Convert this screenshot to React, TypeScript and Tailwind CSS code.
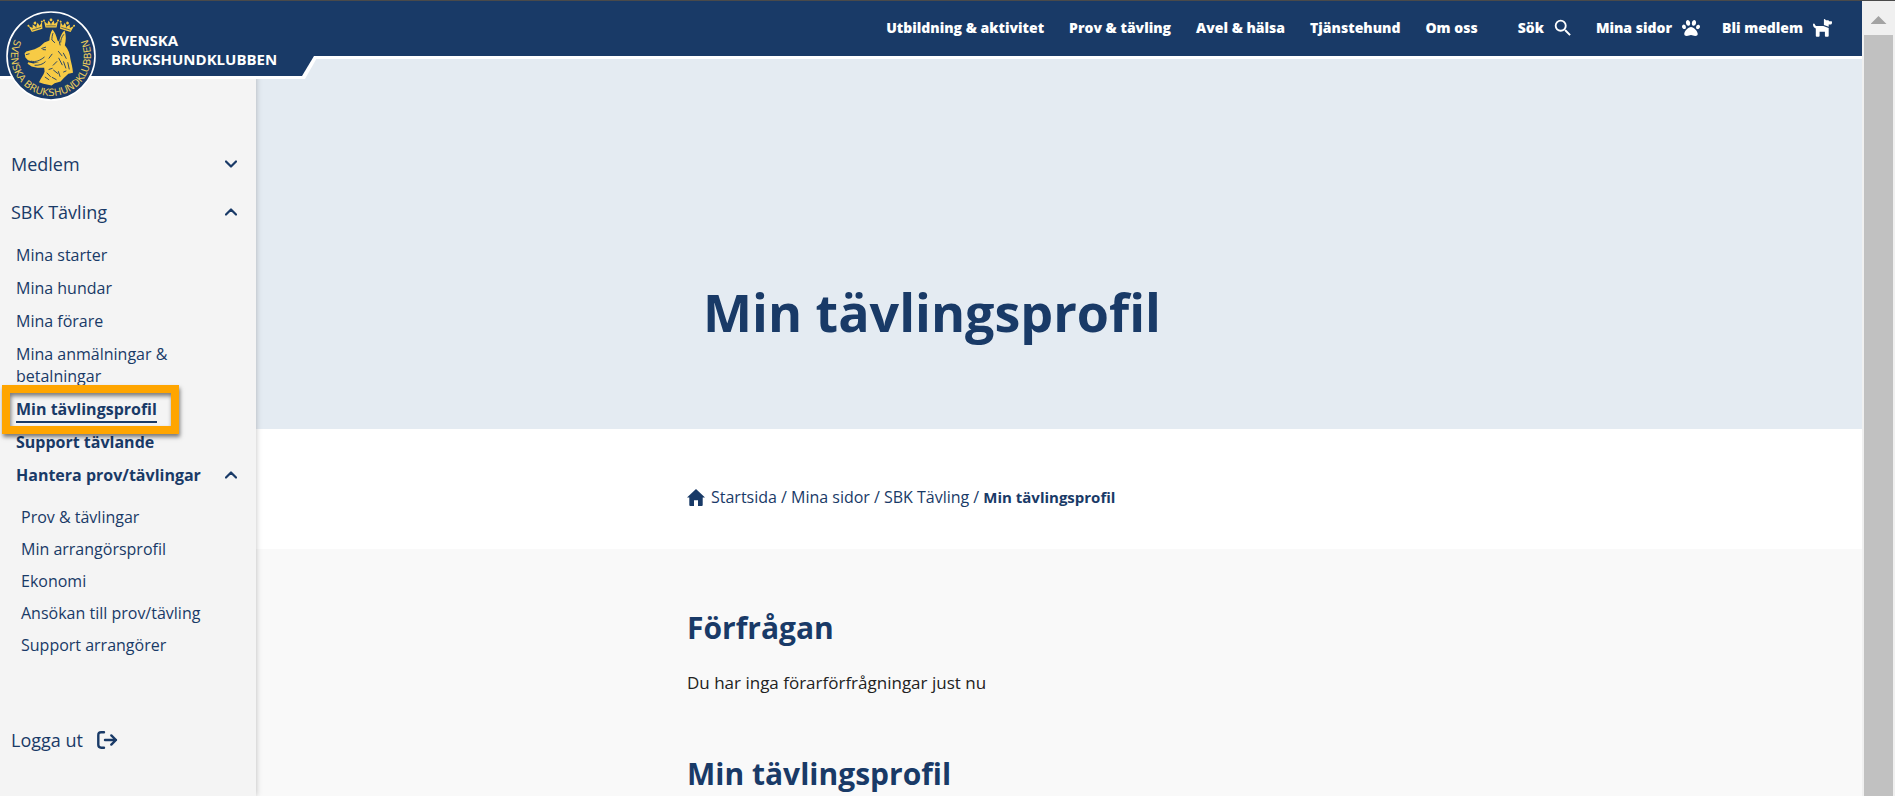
import { useState } from 'react';
import { FaPaw } from 'react-icons/fa';
import { MdSearch } from 'react-icons/md';

const topLinks = ['Utbildning & aktivitet', 'Prov & tävling', 'Avel & hälsa', 'Tjänstehund', 'Om oss'];

const competitionLinks = ['Mina starter', 'Mina hundar', 'Mina förare', 'Mina anmälningar & betalningar'];

const organizerLinks = ['Prov & tävlingar', 'Min arrangörsprofil', 'Ekonomi', 'Ansökan till prov/tävling', 'Support arrangörer'];

function Chevron({ open }: { open: boolean }) {
    return (
        <svg viewBox="0 0 12 8" className="w-3 h-2 shrink-0" fill="none" stroke="currentColor" strokeWidth="2.2" strokeLinecap="round" strokeLinejoin="round" aria-hidden="true">
            <path d={open ? 'M1 6.5 6 1.5 11 6.5' : 'M1 1.5 6 6.5 11 1.5'} />
        </svg>
    );
}

function HomeIcon() {
    return (
        <svg viewBox="0 0 18 17" className="w-[18px] h-[17px] shrink-0" fill="currentColor" aria-hidden="true">
            <path d="M9 0 0 8.4h2.3V16c0 .6.3 1 .9 1H7v-5.8h4V17h3.8c.6 0 .9-.4.9-1V8.4H18z" />
        </svg>
    );
}

function DogIcon() {
    return (
        <svg viewBox="0 0 19 18" className="w-[19px] h-[18px] shrink-0" fill="currentColor" aria-hidden="true">
            <path d="M0 5.2C.1 4.2 1.4 4.1 1.7 5c.4 1.5 1 2 2.3 2H10.3l5.4 1.9V16.8c0 .6-.3.9-.9.9h-2c-.6 0-.9-.3-.9-.9v-4.1H6.6v4.1c0 .6-.3.9-.9.9h-2c-.6 0-.9-.3-.9-.9V9.4C1 8.8 0 7.4 0 5.2z" />
            <path d="M10.9.6c.1-.7.7-.8 1.1-.3l1 .9h2.4l.8 1h2.2c.4 0 .6.2.6.6v.9c0 1.2-.8 1.9-1.9 1.9h-1.4v2.2l-4.8-1.7z" />
        </svg>
    );
}

function LogoutIcon() {
    return (
        <svg viewBox="0 0 21 18" className="w-[21px] h-[18px] shrink-0" fill="none" stroke="currentColor" strokeWidth="2.4" strokeLinecap="round" strokeLinejoin="round" aria-hidden="true">
            <path d="M7 1.3H4.2Q1.3 1.3 1.3 4.2v9.6q0 2.9 2.9 2.9H7" />
            <path d="M8 9h11M14.3 4.4 19 9l-4.7 4.6" />
        </svg>
    );
}

function Crown({ transform }: { transform: string }) {
    return (
        <g transform={transform}>
            <path d="M-5.5 4 -7-2.6-3.6.4-2.6-3 0 .2 2.6-3 3.6.4 7-2.6 5.5 4z" fill="#f7cb45" />
            <circle cx="-7" cy="-3" r="1" fill="#f7cb45" />
            <circle cx="0" cy="-3.6" r="1.4" fill="#f7cb45" />
            <circle cx="7" cy="-3" r="1" fill="#f7cb45" />
            <path d="M0-1v2M-4.8 2.3h9.6" stroke="#193a67" strokeWidth=".6" />
        </g>
    );
}

function Emblem() {
    return (
        <svg viewBox="0 0 90 90" className="w-[90px] h-[90px] shrink-0" role="img" aria-label="Svenska Brukshundklubben">
            <circle cx="45" cy="45" r="44" fill="#193a67" stroke="#fff" strokeWidth="1.6" />
            <defs>
                <path id="ring" d="M16.7 16.7A40 40 0 1 0 73.3 16.7" />
            </defs>
            <text fill="#e8cb5c" fontFamily="'DejaVu Sans', sans-serif" fontSize="10">
                <textPath href="#ring" startOffset="50%" textAnchor="middle">SVENSKA BRUKSHUNDKLUBBEN</textPath>
            </text>
            <Crown transform="translate(30 15.5) rotate(-17)" />
            <Crown transform="translate(45 12.5)" />
            <Crown transform="translate(60.5 15.5) rotate(17)" />
            {/* herdehundens huvud */}
            <path
                fill="#f7cb45"
                d="M46.5 18.5C48.5 20.6 50.5 25 51.5 29.5L53.3 30.4C54 26 56.2 21.5 58.6 19.6 60.2 24.6 60.2 29.6 58.8 34.2 62.4 38.4 64.2 43.6 64.4 48 65.4 52.4 66.6 56.6 67 61.8L62.4 62.8 57.6 67.2 54.6 70.4 48.6 72.2 45.6 74.6 37.4 72.8 33 71.2C34.6 67 37.6 64.4 38.6 60.4L38.2 56.8 31.4 56.8 25.6 55.4 21.6 52.8 22.2 51.2 27.4 52.6 33.2 51.2 28.4 51.2 22 49.2 19.4 46.4 18.6 42.6 20.2 40.4 28.6 38.2 34 35.4 38.4 31.4 43.4 29.4C43.6 25.4 44.6 21.4 46.5 18.5Z"
            />
            <g fill="none" stroke="#193a67" strokeWidth=".9" strokeLinecap="round">
                <path d="M46.9 22.5c-.8 2-1 4.4-1 6.5l2.8 2.6M57.6 23.6c-2 2.4-2.9 5-2.9 7.6M53.3 30.6l.8 3.4" />
                <path d="M35.8 37.4l3.8-1.2M37 38.6l2.6.2M20.3 43.6l2.8-.8M25.2 50.2c4.6 1.2 8.8-.6 13-4" />
                <path d="M29 54.3c4.4 0 7.6-.8 10.2-3.4M43 47.2l3-4M47.2 54.2l3.6-3.6M43 58.4l3.2-1" />
                <path d="M52.4 40.4l3.6 4.4M57.4 42.2l2.8 5.2M52.8 47.2l3.4 6.6M57.6 50.8l2.2 6.2M61.8 51.6l1.4 6.4M47.6 59.2l4 3.2M41 62l3.4 3.6M39.2 66.2l3.6 2.4M46.2 66.4l4 2.2M52.4 60.6l1.6 4.8M57.6 61l2.4-1" />
            </g>
        </svg>
    );
}

function TopBar() {
    return (
        <header className="relative z-20 h-[58px] shrink-0 border-b-[3px] border-white bg-[#193a67] text-white">
            {/* flik under menyraden */}
            <div className="absolute left-0 top-[55px] h-[23px] w-[318px] bg-white [clip-path:polygon(0_0,100%_0,305px_100%,0_100%)]">
                <div className="h-5 w-[314px] bg-[#193a67] [clip-path:polygon(0_0,100%_0,302px_100%,0_100%)]" />
            </div>
            <a href="#" className="absolute left-[6px] top-[10px] flex items-center gap-[15px]">
                <Emblem />
                <span className="pb-3 text-[15px] leading-[19px] font-bold">
                    SVENSKA
                    <br />
                    BRUKSHUNDKLUBBEN
                </span>
            </a>
            <nav className="flex h-[54px] items-center justify-end pr-[30px] text-sm font-extrabold whitespace-nowrap">
                <div className="flex gap-[25px]">
                    {topLinks.map((label) => (
                        <a key={label} href="#">{label}</a>
                    ))}
                </div>
                <div className="ml-10 flex gap-[22px]">
                    <a href="#" className="flex items-center gap-2">
                        Sök <MdSearch className="w-[22px] h-[22px]" />
                    </a>
                    <a href="#" className="flex items-center gap-[10px]">
                        Mina sidor <FaPaw className="w-[18px] h-[18px]" />
                    </a>
                    <a href="#" className="flex items-center gap-[10px]">
                        Bli medlem <DogIcon />
                    </a>
                </div>
            </nav>
        </header>
    );
}

function Sidebar() {
    const [memberOpen, setMemberOpen] = useState(false);
    const [competitionOpen, setCompetitionOpen] = useState(true);
    const [organizerOpen, setOrganizerOpen] = useState(true);

    return (
        <aside className="relative z-10 w-64 shrink-0 bg-[#f4f4f4] pt-[93px] shadow-[0_0_6px_rgba(0,0,0,0.25)]">
            <nav className="flex flex-col pl-[11px] pr-[19px] text-base leading-[22px]">
                <button onClick={() => setMemberOpen(!memberOpen)} className="flex h-6 items-center justify-between text-lg">
                    Medlem <Chevron open={memberOpen} />
                </button>
                <button onClick={() => setCompetitionOpen(!competitionOpen)} className="mt-6 flex h-6 items-center justify-between text-lg">
                    SBK Tävling <Chevron open={competitionOpen} />
                </button>
                {competitionOpen && (
                    <ul className="mt-5 flex flex-col gap-[11px] pl-[5px]">
                        {competitionLinks.map((label) => (
                            <li key={label} className="w-40">
                                <a href="#">{label}</a>
                            </li>
                        ))}
                        <li className="relative h-[22px] font-bold">
                            <a href="#" aria-current="page" className="inline-block border-b-2 border-[#193a67] pb-px">Min tävlingsprofil</a>
                            <span className="pointer-events-none absolute -left-[14px] -top-[13px] h-[49px] w-[177px] border-8 border-[#ffa500] shadow-[1px_3px_4px_rgba(0,0,0,0.5),inset_1px_3px_4px_rgba(0,0,0,0.5)]" />
                        </li>
                        <li className="font-bold">
                            <a href="#">Support tävlande</a>
                        </li>
                        <li>
                            <button onClick={() => setOrganizerOpen(!organizerOpen)} className="flex w-full items-center justify-between font-bold">
                                Hantera prov/tävlingar <Chevron open={organizerOpen} />
                            </button>
                            {organizerOpen && (
                                <ul className="mt-5 flex flex-col gap-[10px] pl-[5px]">
                                    {organizerLinks.map((label) => (
                                        <li key={label}>
                                            <a href="#">{label}</a>
                                        </li>
                                    ))}
                                </ul>
                            )}
                        </li>
                    </ul>
                )}
                <a href="#" className="mt-[72px] flex items-center gap-[14px] text-lg leading-6">
                    Logga ut <LogoutIcon />
                </a>
            </nav>
        </aside>
    );
}

function Breadcrumbs() {
    return (
        <nav aria-label="Brödsmulor" className="bg-white">
            <ol className="mx-auto flex h-[120px] max-w-[744px] items-center gap-1 pt-4 text-base">
                <li className="flex items-center gap-[6px]">
                    <HomeIcon />
                    <a href="#">Startsida</a>
                </li>
                <li>/ <a href="#">Mina sidor</a></li>
                <li>/ <a href="#">SBK Tävling</a></li>
                <li>/ <b className="text-[15px]">Min tävlingsprofil</b></li>
            </ol>
        </nav>
    );
}

function WindowScrollbar() {
    return (
        <div className="flex w-[33px] shrink-0 flex-col bg-[#f0f0f0] px-[2px]">
            <button aria-label="Rulla upp" className="flex h-[34px] shrink-0 items-center justify-center pt-1">
                <span className="h-2 w-4 bg-[#a3a3a3] [clip-path:polygon(50%_0,100%_100%,0_100%)]" />
            </button>
            <div className="flex-1 bg-[#c1c1c1]" />
        </div>
    );
}

export default function App() {
    return (
        <div className="flex h-screen overflow-hidden border-t border-[#4a4a4a] font-['Open_Sans',sans-serif] text-[#193a67] [font-variant-ligatures:none]">
            <div className="flex min-w-0 flex-1 flex-col">
                <TopBar />
                <div className="flex min-h-0 flex-1">
                    <Sidebar />
                    <main className="flex min-w-0 flex-1 flex-col overflow-hidden">
                        <div className="flex h-[370px] shrink-0 flex-col justify-end bg-[#e4ebf2] px-4 pb-[82px]">
                            <h1 className="mx-auto w-full max-w-[744px] px-4 text-[52px] leading-[70px] font-bold">Min tävlingsprofil</h1>
                        </div>
                        <Breadcrumbs />
                        <div className="flex-1 bg-[#f9f9f9] pt-[59px]">
                            <div className="mx-auto max-w-[744px]">
                                <h2 className="text-[30px] leading-10 font-bold">Förfrågan</h2>
                                <p className="mt-[23px] text-[17px] leading-6 text-[#222]">Du har inga förarförfrågningar just nu</p>
                                <h2 className="mt-[59px] text-[30px] leading-10 font-bold">Min tävlingsprofil</h2>
                            </div>
                        </div>
                    </main>
                </div>
            </div>
            <WindowScrollbar />
        </div>
    );
}
